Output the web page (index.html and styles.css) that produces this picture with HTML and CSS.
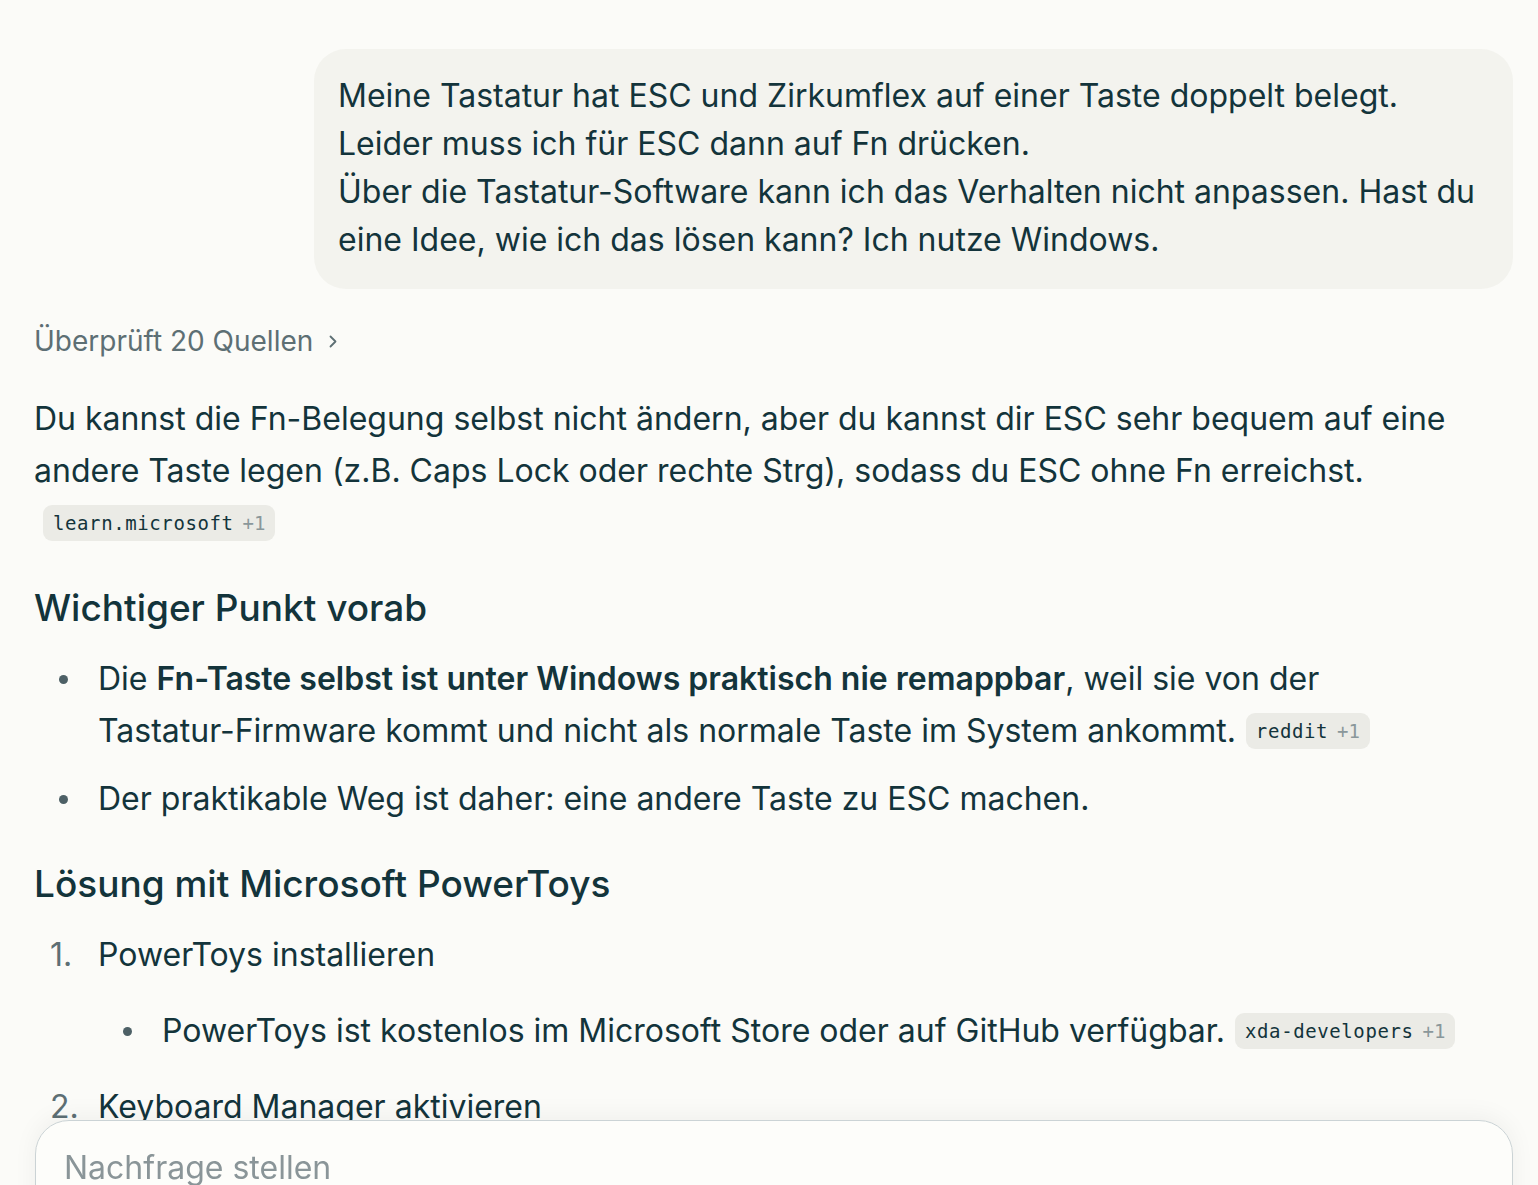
FILE: index.html
```html
<!DOCTYPE html>
<html lang="de">
<head>
<meta charset="utf-8">
<link rel="stylesheet" href="styles.css">
</head>
<body>
<main class="thread">
  <div class="user-row">
    <div class="bubble">
      <p>Meine Tastatur hat ESC und Zirkumflex auf einer Taste doppelt belegt.<br>Leider muss ich für ESC dann auf Fn drücken.<br>Über die Tastatur-Software kann ich das Verhalten nicht anpassen. Hast du eine Idee, wie ich das lösen kann? Ich nutze Windows.</p>
    </div>
  </div>

  <div class="sources">Überprüft 20 Quellen <svg class="chev" width="16" height="18" viewBox="0 0 16 18"><path d="M5.5 4.5 L10.5 9.5 L5.5 14.5" fill="none" stroke="currentColor" stroke-width="1.8" stroke-linecap="round" stroke-linejoin="round"/></svg></div>

  <div class="answer">
    <p class="para">Du kannst die Fn-Belegung selbst nicht ändern, aber du kannst dir ESC sehr bequem auf eine andere Taste legen (z.B. Caps Lock oder rechte Strg), sodass du ESC ohne Fn erreichst. <span class="chip chip-wrap">learn.microsoft <span class="more">+1</span></span></p>

    <h2>Wichtiger Punkt vorab</h2>
    <ul class="bullets">
      <li>Die <strong>Fn-Taste selbst ist unter Windows praktisch nie remappbar</strong>, weil sie von der <span class="nowrap">Tastatur-Firmware</span> kommt und nicht als normale Taste im System ankommt. <span class="chip">reddit <span class="more">+1</span></span></li>
      <li>Der praktikable Weg ist daher: eine andere Taste zu ESC machen.</li>
    </ul>

    <h2>Lösung mit Microsoft PowerToys</h2>
    <ol class="steps">
      <li>PowerToys installieren
        <ul class="bullets nested">
          <li>PowerToys ist kostenlos im Microsoft Store oder auf GitHub verfügbar. <span class="chip">xda-developers <span class="more">+1</span></span></li>
        </ul>
      </li>
      <li>Keyboard Manager aktivieren</li>
    </ol>
  </div>
</main>

<div class="composer">
  <div class="input">Nachfrage stellen</div>
</div>
</body>
</html>
```

FILE: styles.css
```css
* { box-sizing: border-box; }
html, body { margin: 0; padding: 0; }
body {
  background: #fbfbf8;
  color: #13343b;
  font-family: Inter, "Noto Sans", sans-serif;
  font-size: 32px;
  overflow: hidden;
  height: 1185px;
}
.thread {
  width: 1480px;
  margin-left: 34px;
  padding-top: 49px;
}
.user-row {
  display: flex;
  justify-content: flex-end;
}
.bubble {
  width: 1199px;
  margin-right: 1px;
  background: #f3f3ee;
  border-radius: 32px;
  padding: 23px 24px 25px 24px;
}
.bubble p {
  margin: 0;
  line-height: 48px;
}
.sources {
  margin-top: 32px;
  color: #5d6f74;
  display: flex;
  align-items: center;
  gap: 12px;
  font-size: 28px;
  line-height: 40px;
}
.chev { color: #5d6f74; }
.answer { margin-top: 32px; }
.para {
  margin: 0;
  line-height: 52px;
}
.nowrap { white-space: nowrap; }
.chip {
  display: inline-flex;
  align-items: center;
  gap: 9px;
  height: 36px;
  padding: 0 10px;
  margin-left: 1px;
  border-radius: 9px;
  background: #ebebe6;
  font-family: "DejaVu Sans Mono", monospace;
  font-size: 19px;
  letter-spacing: 0.6px;
  color: #13343b;
  vertical-align: 4px;
}
.chip-wrap { margin-left: 9px; }
.chip .more { color: #8a979a; letter-spacing: 0; }
h2 {
  margin: 35px 0 21px;
  font-size: 37px;
  font-weight: 500;
  line-height: 48px;
}
.bullets {
  list-style: none;
  margin: 0;
  padding: 0 0 0 64px;
}
.bullets li {
  position: relative;
  line-height: 52px;
  margin-bottom: 16px;
}
.bullets li::before {
  content: "";
  position: absolute;
  left: -39px;
  top: 22px;
  width: 9px;
  height: 9px;
  border-radius: 50%;
  background: #4d6066;
}
.bullets strong { font-weight: 600; }
.steps {
  margin: 0;
  padding: 0 0 0 64px;
  list-style: none;
  counter-reset: step;
}
.steps > li {
  position: relative;
  line-height: 52px;
  counter-increment: step;
  margin-bottom: 24px;
}
.steps > li::before {
  content: counter(step) ".";
  position: absolute;
  left: -48px;
  color: #5d6f74;
}
.nested { margin-top: 24px; padding-left: 64px; }
.composer {
  position: fixed;
  left: 35px;
  right: 25px;
  top: 1120px;
  height: 120px;
}
.input {
  height: 100%;
  background: #fdfdfa;
  border: 1.5px solid #cbd3d5;
  border-radius: 34px;
  padding: 27px 28px;
  color: #8a9598;
  font-size: 32px;
  line-height: 40px;
  box-shadow: 0 -4px 24px rgba(0,0,0,0.05);
}
```
